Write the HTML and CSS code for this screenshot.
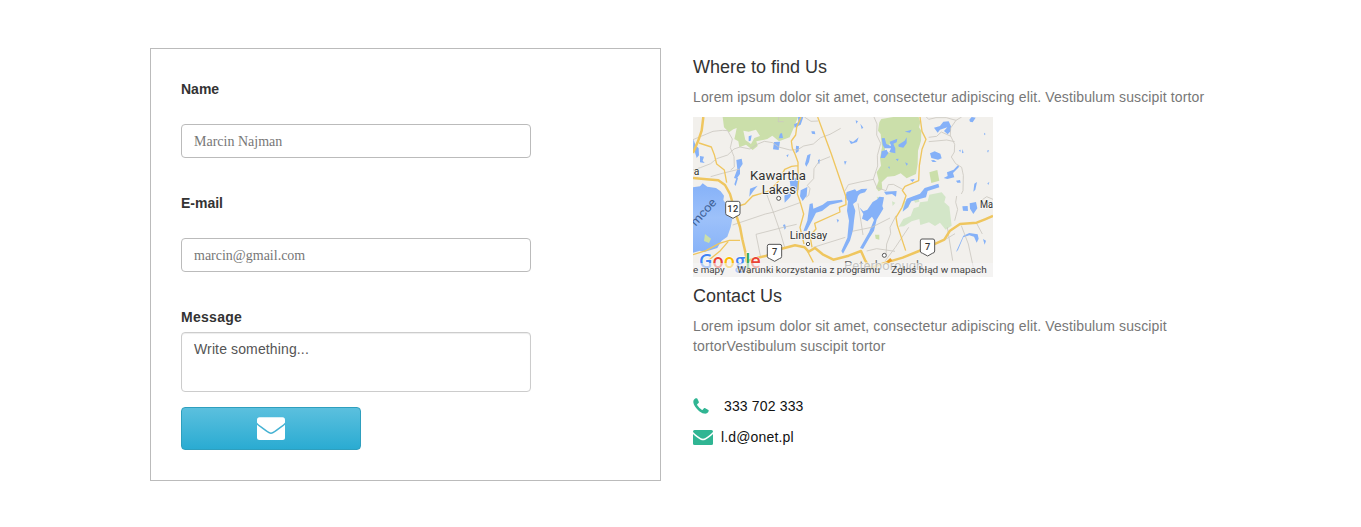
FILE: index.html
```
<!DOCTYPE html>
<html lang="en">
<head>
<meta charset="utf-8">
<title>Contact</title>
<link rel="stylesheet" href="styles.css">
</head>
<body>
<main class="contact">
  <form class="form">
    <label class="label" for="name">Name</label>
    <input class="input" id="name" type="text" placeholder="Marcin Najman">
    <label class="label" for="email">E-mail</label>
    <input class="input" id="email" type="text" placeholder="marcin@gmail.com">
    <label class="label label-message" for="message">Message</label>
    <textarea class="textarea" id="message" placeholder="Write something..."></textarea>
    <button class="send" type="button" aria-label="Send">
      <svg width="28" height="24" viewBox="0 0 28 24"><rect y=".3" width="28" height="22.700" rx="2.500" fill="#fff"/><path d="M-.5 6.200C1 8.200 4.500 10.200 8 12.900 10.500 14.800 12.300 16.300 14 16.300S17.500 14.800 20 12.900C23.500 10.200 27 8.200 28.500 6.200" fill="none" stroke="#45b2d3" stroke-width="1.500"/></svg>
    </button>
  </form>
  <section class="info">
    <h4 class="title">Where to find Us</h4>
    <p class="text">Lorem ipsum dolor sit amet, consectetur adipiscing elit. Vestibulum suscipit tortor</p>
    <svg class="map" viewBox="9 9 900 480" width="300" height="160">
      <defs>
        <linearGradient id="lake" x1="0" y1="0" x2="0" y2="1"><stop offset="0" stop-color="#85b1f8"/><stop offset=".5" stop-color="#9dc1fa"/><stop offset="1" stop-color="#88b3f8"/></linearGradient>
      </defs>
      <rect x="9" y="9" width="900" height="480" fill="#f2f0ec"/>
      <g fill="#cbdfaa">
        <path d="M98 9 102 40 117 55 130 46 140 42 137 58 133 75 145 82 148 100 168 92 188 108 203 96 199 82 232 75 247 65 267 82 299 70 312 40 324 9Z"/>
        <path d="M574 15 610 9 686 9 691 25 687 40 694 50 693 80 684 110 683 150 678 180 650 193 632 178 614 186 592 188 575 205 577 226 566 232 558 222 566 200 560 175 573 155 570 132 576 100 572 60 564 50 568 25Z"/>
        <path d="M718 175 742 168 748 200 724 207Z"/>
        <path d="M555 362 568 362 568 377 557 374Z"/>
      </g>
      <g fill="#d3e6c8">
        <path d="M718 242 755 235 767 249 763 265 778 278 785 335 767 347 750 326 735 336 717 325 691 333 688 315 665 322 642 337 626 338 640 315 662 306 671 283 686 278 690 265 713 262Z"/>
        <path d="M668 247 685 244 688 263 675 266ZM642 262 660 258 656 280 638 290ZM606 262 616 266 608 276ZM560 248 568 250 564 260Z"/>
      </g>
      <path fill="#f2f0ec" d="M160 50 176 53 198 47 210 66 193 72 183 90 166 78ZM584 100 605 88 614 100 600 116 586 112Z"/>
      <path fill="url(#lake)" d="M9 220 30 217 38 208 52 218 78 222 92 232 102 245 100 258 112 275 109 290 128 310 122 340 112 368 95 380 82 402 63 408 42 414 30 410 9 416Z"/>
      <path fill="#cbdfaa" d="M45 360 63 374 57 387 42 381Z"/>
      <g fill="#85b1f8">
        <path d="M10 75 16 92 26 103 27 124 20 132 14 112 9 115ZM30 126 42 128 38 140 44 147 30 145Z"/>
        <path d="M139 138 155 134 158 150 150 162 150 180 140 194 132 192 142 166ZM140 190 144 193 137 216 133 211ZM180 224 203 215 190 231 178 248Z"/>
        <path d="M176 67 185 64 182 80 176 82ZM252 84 270 83 266 108 249 106ZM270 59 276 57 279 72 266 73ZM318 95 327 97 326 112 317 118ZM364 52 374 52 376 61 366 59ZM289 124 296 121 293 130Z"/>
        <path d="M324 9 340 9 332 32 314 41 312 31 325 25ZM352 124 362 119 357 144 349 158 345 150ZM384 138 390 136 388 149 384 148Z"/>
        <path d="M299 200 323 190 332 177 325 208 326 227 306 236 300 250 284 266 283 245 303 226ZM332 229 352 219 350 245 338 261 330 247Z"/>
        <path d="M497 19 504 22 499 29ZM511 29 520 41 515 45ZM477 79 489 84 506 70 501 84 483 90ZM462 142 470 142 465 153Z"/>
        <path d="M575 73 584 72 589 90 603 96 599 83 622 74 620 85 610 89 616 103 616 118 598 114 603 103 584 103 578 93ZM575 112 590 107 595 118 584 132 572 132ZM625 92 644 80 650 70 650 88 640 101 626 98ZM644 53 665 47 660 56ZM617 135 626 134 623 142ZM645 145 654 149 650 155ZM598 157 600 165 594 160ZM660 197 674 195 668 204Z"/>
        <path d="M732 41 750 36 760 23 776 22 783 37 783 50 773 61 762 51 772 40 750 47 743 56ZM838 17 845 9 857 11 848 25 840 23ZM720 118 734 112 751 119 755 133 744 137 724 132ZM723 139 732 138 740 144 728 144ZM761 192 773 186 771 175 791 167 805 152 807 159 789 177 793 190 772 195ZM798 200 810 198 812 206 802 206ZM853 209 861 204 856 227 850 233ZM807 109 812 107 811 115ZM817 105 821 116 816 118ZM882 56 887 60 883 64ZM891 110 897 108 894 116ZM892 208 898 204 895 213Z"/>
        <path d="M470 234 495 226 500 232 514 225 532 224 525 235 510 239 504 246 500 262 489 270 496 290 492 320 489 349 480 380 459 419 454 411 472 371 477 320 471 290 474 262 466 250Z"/>
        <path d="M508 280 520 292 532 287 548 264 562 256 568 248 582 250 577 276 580 284 560 317 552 350 538 372 519 405 510 402 537 355 552 318 546 308 532 322 516 314 520 300Z"/>
        <path d="M582 233 620 231 618 248 606 240 588 242ZM640 285 650 254 690 239 704 222 745 209 748 220 713 231 708 250 664 262 654 280 638 293Z"/>
        <path d="M359 270 368 268 370 284 398 272 412 262 456 257 458 263 420 272 396 291 378 296 366 320 350 350 340 352 352 320Z"/>
        <path d="M440 315 447 318 443 326ZM279 333 285 331 288 341 284 347Z"/>
        <path d="M817 277 833 276 834 291 819 290ZM839 268 858 264 862 283 850 300 840 284ZM820 365 838 357 863 361 866 374 860 386 852 368 838 364 820 370 804 408 798 414ZM879 375 888 380 884 392Z"/>
      </g>
      <g fill="none" stroke="#cbc8c1" stroke-width="2.500">
        <path d="M9 77 45 62 69 52 98 49 113 50 127 75 121 101 132 128 133 159 122 168M9 168 31 161 62 149 80 134 113 123 132 105 150 99 180 105 201 91 223 82 248 86 266 99 300 108 323 107 341 96 370 90 392 71 420 61 452 43M62 188 97 178 150 165"/>
        <path d="M266 9 265 23 281 23M343 9 363 22 384 21M420 128 388 141 372 164 371 194 352 214 360 224 356 244 348 250M552 9 561 30 560 63 572 88 562 125 563 156 555 180 550 196 510 204 475 212 464 232M550 195 561 221 588 230 595 212 610 211 638 226M709 9 716 16 738 11 769 11 798 19 815 9M798 19 782 42 781 64 794 91 793 114 784 129 797 149 815 160 820 184 819 230 814 240M716 70 740 67 754 54 783 67M716 83 770 78 794 83"/>
        <path d="M128 333 226 300 252 294 330 266M228 235 252 300 271 355 284 400M198 361 276 341 320 331M198 361 212 430M370 400 466 370M504 268 513 323 519 363M486 352 545 340 600 312M588 420 590 390 602 358 600 340 618 305M586 440 616 400 656 340M530 411 560 404 615 412M772 340 788 440M794 320 803 286 797 265 800 246M814 335 835 390 850 460M861 330 877 360M767 376 795 359M870 262 890 248 909 256"/>
      </g>
      <g fill="none" stroke="#efc65f" stroke-width="4" stroke-linejoin="round">
        <path d="M27 87 64 99 73 122 80 150 103 168 110 206M333 9 320 40 317 63 304 81 307 103 315 120 324 145 324 170 326 200 322 240 330 262 341 300 330 340 342 390M383 9 424 120 467 246M690 9 696 52 708 76 696 106 688 155 686 200 645 217 637 229 648 245 636 280 618 310 622 334 647 410M120 284 165 270 188 246 238 231 265 202 284 166 305 157 323 155M467 246 468 272 448 280 450 294 374 328 378 345 360 365 366 400M9 422 48 410 88 388 118 379 150 379M56 439 91 410 115 382M348 403 370 445"/>
      </g>
      <g fill="none" stroke="#efc65f" stroke-width="7.500" stroke-linejoin="round">
        <path d="M40 9 35 50 24 82 9 117M9 192 50 196 85 199 105 213 120 240 136 295 150 339 157 376 166 414 170 442 192 434 230 425 275 404 315 394 344 400 356 413 375 402 398 421 430 437 453 431 476 425 513 411 526 440 540 462 590 445 638 431 687 411 730 392 763 377 780 350 810 330 860 326 885 316 909 306M172 442 178 480"/>
      </g>
      <path d="M592 446 604 436" stroke="#e9a02b" stroke-width="10"/>
      <g fill="#fff" stroke="#555" stroke-width="3">
        <path d="M112 262H145Q150 262 150 268V298Q150 304 143 305L129 313 114 305Q107 304 107 298V268Q107 262 112 262Z"/>
        <path d="M237 391H270Q275 391 275 397V427Q275 433 268 434L254 442 239 434Q232 433 232 427V397Q232 391 237 391Z"/>
        <path d="M696 375H729Q734 375 734 381V411Q734 417 727 418L713 426 698 418Q691 417 691 411V381Q691 375 696 375Z"/>
        <circle cx="266" cy="253" r="6"/><circle cx="354" cy="390" r="5"/><circle cx="583" cy="424" r="6"/>
      </g>
      <g class="map-label">
        <text x="180" y="199" font-size="38" textLength="168" lengthAdjust="spacingAndGlyphs">Kawartha</text>
        <text x="215" y="239" font-size="38" textLength="103" lengthAdjust="spacingAndGlyphs">Lakes</text>
        <text x="11" y="183" font-size="31">a</text>
        <text x="299" y="375" font-size="32" textLength="113" lengthAdjust="spacingAndGlyphs">Lindsay</text>
        <text x="870" y="281" font-size="30" textLength="39" lengthAdjust="spacingAndGlyphs">Ma</text>
        <text x="462" y="467" font-size="38" opacity=".65" textLength="238" lengthAdjust="spacingAndGlyphs">Peterborough</text>
        <text x="112" y="294" font-size="28" textLength="33" class="route">12</text>
        <text x="246" y="424" font-size="28" class="route">7</text>
        <text x="705" y="407" font-size="28" class="route">7</text>
        <text class="water" transform="translate(17 338) rotate(-48)" font-size="36" textLength="96" lengthAdjust="spacingAndGlyphs">mcoe</text>
      </g>
      <text class="google" x="27" y="462" font-size="60" textLength="186" lengthAdjust="spacingAndGlyphs"><tspan fill="#4285f4">G</tspan><tspan fill="#ea4335">o</tspan><tspan fill="#fbbc05">o</tspan><tspan fill="#4285f4">g</tspan><tspan fill="#34a853">l</tspan><tspan fill="#ea4335">e</tspan></text>
      <rect x="9" y="447" width="900" height="42" fill="#f5f5f5" opacity=".62"/>
      <g class="credits">
        <text x="9" y="476" textLength="95" lengthAdjust="spacingAndGlyphs">e mapy</text>
        <text x="142" y="476" textLength="428" lengthAdjust="spacingAndGlyphs">Warunki korzystania z programu</text>
        <text x="604" y="476" textLength="286" lengthAdjust="spacingAndGlyphs">Zgłoś błąd w mapach</text>
      </g>
    </svg>
    <h4 class="title">Contact Us</h4>
    <p class="text text-contact">Lorem ipsum dolor sit amet, consectetur adipiscing elit. Vestibulum suscipit tortorVestibulum suscipit tortor</p>
    <div class="line phone">
      <svg width="16" height="16" viewBox="0 0 16 16"><path fill="#30b593" d="M15.700 12.200C15.700 13.400 15 14.600 14.300 15 13.400 15.600 12.300 15.800 11.100 15.600 9 15.200 6.700 13.700 4.700 11.700 2.500 9.400.8 6.900.4 4.700.2 3.200.5 1.800 1.600 1 2.400.4 3.300.3 3.900.3 4.400.4 5.800 3.700 5.900 4.200 6 5.100 3.900 6 4 6.700 4.500 8 7.900 11.400 9.300 11.900 9.900 12.100 10.700 10 11.500 10 12.100 10.100 15.500 11.900 15.700 12.200Z"/></svg>
      <span>333 702 333</span>
    </div>
    <div class="line mail">
      <svg width="20" height="16" viewBox="0 0 20 16"><rect y="1" width="20" height="15" rx="1.500" fill="#30b593"/><path d="M-.5 3.500C1.500 5.700 7.500 10.600 10 10.600S18.500 5.700 20.500 3.500" fill="none" stroke="#fff" stroke-width="1.500"/></svg>
      <span>l.d@onet.pl</span>
    </div>
  </section>
</main>
</body>
</html>
```
FILE: styles.css
```
* { box-sizing: border-box; }
body { margin: 0; background: #fff; color: #333; font: 14px/20px "Liberation Sans", Arial, sans-serif; }
.contact { display: flex; gap: 32px; padding: 48px 0 0 150px; }
.form { display: flex; flex-direction: column; align-items: flex-start; width: 511px; height: 433px; padding: 30px; border: 1px solid #bbb; }
.label { font-weight: bold; margin-bottom: 25px; }
.label-message { margin-bottom: 5px; letter-spacing: .28px; }
.input, .textarea { display: block; width: 350px; border: 1px solid #bbb; border-radius: 4px; padding: 6px 12px; color: #555; font: 14px/20px "Liberation Sans", Arial, sans-serif; }
.input { height: 34px; margin: 0 0 35px; padding: 7px 12px 5px; font-family: "Liberation Serif", "Times New Roman", serif; }
.input::placeholder { color: #777; opacity: 1; }
.textarea { height: 60px; margin: 0 0 15px; resize: none; border-color: #ccc; box-shadow: inset 0 1px 1px rgba(0, 0, 0, .075); letter-spacing: .13px; }
.textarea::placeholder { color: #555; opacity: 1; }
.send { display: flex; align-items: center; justify-content: center; width: 180px; height: 43px; padding: 0; border: 1px solid #2e9fbe; border-radius: 4px; background: linear-gradient(#5bc0de, #2aabd2); }
.info { width: 530px; padding-top: 9px; }
.title { margin: 0 0 10px; font-size: 18px; font-weight: normal; line-height: 20px; }
.text { margin: 0 0 10px; color: #777; letter-spacing: .132px; }
.map { display: block; margin-bottom: 9px; }
.text-contact { width: 500px; margin-bottom: 40px; }
.line { display: flex; align-items: center; height: 20px; color: #111; letter-spacing: .15px; }
.phone { gap: 15px; margin-bottom: 11px; }
.mail { gap: 8px; }
.map-label { font-family: Roboto, sans-serif; fill: #333; stroke: #f8f8f5; stroke-width: 5px; paint-order: stroke; }
.map-label .route { font-weight: 500; stroke: none; }
.map-label .water { fill: #3d5f96; stroke: none; }
.google { font-family: "Open Sans", sans-serif; font-weight: 600; stroke: #fff; stroke-width: 3px; paint-order: stroke; }
.credits { font: 28px Roboto, sans-serif; fill: #444; }
```
